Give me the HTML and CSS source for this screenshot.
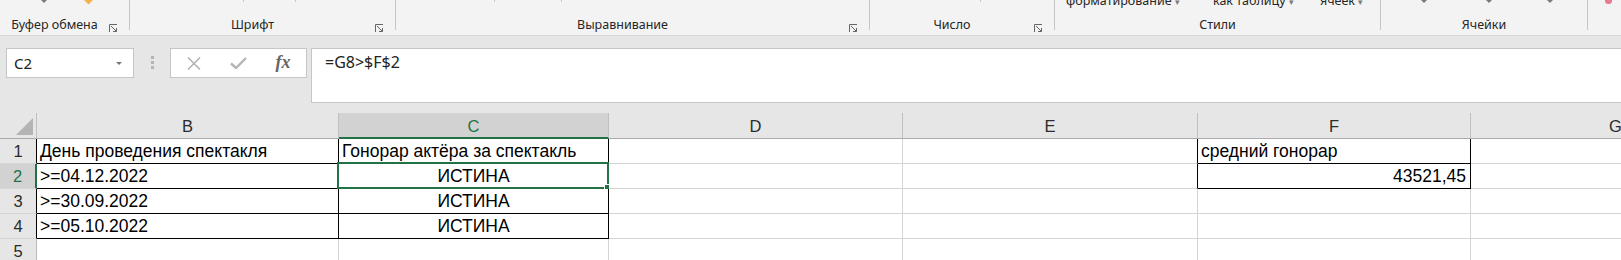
FILE: index.html
```html
<!DOCTYPE html>
<html>
<head>
<meta charset="utf-8">
<title>Книга1 - Excel</title>
<link rel="stylesheet" href="styles.css">
</head>
<body>

<div class="ribbon">
  <div class="group g-clip">
    <div class="top">
      <span class="caret" style="margin-left:41px"></span>
      <span class="paste-tip"></span>
    </div>
    <div class="foot">
      <span class="label">Буфер обмена</span>
      <span class="launch"><svg width="9" height="9" viewBox="0 0 9 9"><path d="M0.5 8V0.5H8" fill="none" stroke="#666"/><path d="M2 2L7.5 7.5M4 7.5H7.5V4" fill="none" stroke="#666"/></svg></span>
    </div>
  </div>
  <div class="group g-font">
    <div class="top">
      <span class="tick" style="margin-left:113px"></span>
      <span class="tick" style="margin-left:51px"></span>
    </div>
    <div class="foot">
      <span class="label">Шрифт</span>
      <span class="launch"><svg width="9" height="9" viewBox="0 0 9 9"><path d="M0.5 8V0.5H8" fill="none" stroke="#666"/><path d="M2 2L7.5 7.5M4 7.5H7.5V4" fill="none" stroke="#666"/></svg></span>
    </div>
  </div>
  <div class="group g-align">
    <div class="top">
      <span class="tick" style="margin-left:98px"></span>
      <span class="tick" style="margin-left:66px"></span>
    </div>
    <div class="foot">
      <span class="label">Выравнивание</span>
      <span class="launch"><svg width="9" height="9" viewBox="0 0 9 9"><path d="M0.5 8V0.5H8" fill="none" stroke="#666"/><path d="M2 2L7.5 7.5M4 7.5H7.5V4" fill="none" stroke="#666"/></svg></span>
    </div>
  </div>
  <div class="group g-num">
    <div class="top">
      <span class="tick" style="margin-left:110px"></span>
    </div>
    <div class="foot">
      <span class="label">Число</span>
      <span class="launch"><svg width="9" height="9" viewBox="0 0 9 9"><path d="M0.5 8V0.5H8" fill="none" stroke="#666"/><path d="M2 2L7.5 7.5M4 7.5H7.5V4" fill="none" stroke="#666"/></svg></span>
    </div>
  </div>
  <div class="group g-styles">
    <div class="top">
      <span class="cut w1">форматирование <i>▾</i></span>
      <span class="cut w2">как таблицу <i>▾</i></span>
      <span class="cut">ячеек <i>▾</i></span>
    </div>
    <div class="foot">
      <span class="label">Стили</span>
    </div>
  </div>
  <div class="group g-cells">
    <div class="top">
      <span class="caret" style="margin-left:40px"></span>
      <span class="caret" style="margin-left:59px"></span>
      <span class="caret" style="margin-left:55px"></span>
    </div>
    <div class="foot">
      <span class="label">Ячейки</span>
    </div>
  </div>
  <div class="group g-edit">
    <div class="top">
      <span class="eraser"></span>
    </div>
  </div>
</div>

<div class="fbar">
  <div class="namebox">
    <span>C2</span>
    <span class="nb-arrow"></span>
  </div>
  <div class="grip"><i></i><i></i><i></i></div>
  <div class="fxbox">
    <span class="slot s1"><svg width="14" height="13" viewBox="0 0 14 13"><path d="M1 0.5L13 12.5M13 0.5L1 12.5" stroke="#b4b4b4" stroke-width="1.6"/></svg></span>
    <span class="slot s2"><svg width="17" height="12" viewBox="0 0 17 12"><path d="M1 6.5L6 11L16 1" fill="none" stroke="#b4b4b4" stroke-width="2.4"/></svg></span>
    <span class="slot s3"><span class="fx">fx</span></span>
  </div>
  <div class="formula">=G8&gt;$F$2</div>
</div>

<div class="sheet">
  <div class="corner"><svg width="17" height="17" viewBox="0 0 17 17"><path d="M17 0V17H0Z" fill="#b4b4b4"/></svg></div>
  <div class="ch">B</div>
  <div class="ch ch-sel">C</div>
  <div class="ch">D</div>
  <div class="ch">E</div>
  <div class="ch">F</div>
  <div class="ch">G</div>

  <div class="rh rh-k">1</div>
  <div class="c k">День проведения спектакля</div>
  <div class="c k">Гонорар актёра за спектакль</div>
  <div class="c"></div>
  <div class="c kr"></div>
  <div class="c k">средний гонорар</div>
  <div class="c"></div>

  <div class="rh rh-sel">2</div>
  <div class="c k">&gt;=04.12.2022</div>
  <div class="c k mid active">ИСТИНА<span class="sel"><span class="handle"></span></span></div>
  <div class="c"></div>
  <div class="c kr"></div>
  <div class="c k num">43521,45</div>
  <div class="c"></div>

  <div class="rh rh-k">3</div>
  <div class="c k">&gt;=30.09.2022</div>
  <div class="c k mid">ИСТИНА</div>
  <div class="c"></div>
  <div class="c"></div>
  <div class="c"></div>
  <div class="c"></div>

  <div class="rh rh-k">4</div>
  <div class="c k">&gt;=05.10.2022</div>
  <div class="c k mid">ИСТИНА</div>
  <div class="c"></div>
  <div class="c"></div>
  <div class="c"></div>
  <div class="c"></div>

  <div class="rh">5</div>
  <div class="c"></div>
  <div class="c"></div>
  <div class="c"></div>
  <div class="c"></div>
  <div class="c"></div>
  <div class="c"></div>
</div>

</body>
</html>
```

FILE: styles.css
```css
body {
  margin: 0;
  width: 1621px;
  height: 260px;
  overflow: hidden;
  background: #e6e6e6;
  font-family: "Noto Sans", "Open Sans", sans-serif;
  color: #262626;
}

/* ribbon (only the bottom strip is visible) */
.ribbon {
  display: flex;
  height: 35px;
  background: #f3f3f3;
  border-bottom: 1px solid #d6d6d6;
  overflow: hidden;
}
.group {
  height: 30px;
  display: flex;
  flex-direction: column;
  border-right: 1px solid #c6c6c6;
  box-sizing: border-box;
}
.g-clip   { width: 130px; }
.g-font   { width: 266px; }
.g-align  { width: 474px; }
.g-num    { width: 185px; }
.g-styles { width: 326px; }
.g-cells  { width: 207px; }
.g-edit   { flex: 1; border-right: none; }

.top {
  height: 17px;
  display: flex;
  align-items: flex-start;
  overflow: hidden;
  font-size: 12.5px;
  line-height: 16px;
}
.foot {
  display: flex;
  height: 13px;
  font-size: 12.5px;
  line-height: 16px;
}
.label {
  flex: 1;
  text-align: center;
  white-space: nowrap;
}
.launch {
  width: 20px;
  padding-top: 4px;
  box-sizing: border-box;
}

.caret {
  width: 0;
  height: 0;
  border-left: 3px solid transparent;
  border-right: 3px solid transparent;
  border-top: 3px solid #7a7a7a;
}
.paste-tip {
  width: 7px;
  height: 7px;
  margin: -4px 0 0 38px;
  background: #f2b24d;
  transform: rotate(45deg);
}
.tick {
  width: 1px;
  height: 2px;
  background: #c8c8c8;
}
.eraser {
  width: 7px;
  height: 5px;
  margin: -1px 0 0 17px;
  background: #e97a95;
  border-radius: 0 0 3px 3px;
}
.g-styles .top { padding-left: 11px; }
.cut {
  margin-top: -7px;
  white-space: nowrap;
}
.cut i {
  font-style: normal;
  font-size: 9px;
  color: #7a7a7a;
}
.w1 { width: 147px; }
.w2 { width: 107px; }

/* formula bar */
.fbar {
  display: flex;
  align-items: flex-start;
  padding: 12px 0 0 6px;
}
.namebox {
  width: 128px;
  height: 30px;
  box-sizing: border-box;
  display: flex;
  align-items: center;
  padding-left: 7px;
  background: #fff;
  border: 1px solid #c6c6c6;
  font-size: 15px;
  color: #222;
}
.nb-arrow {
  margin: 0 11px 0 auto;
  border-left: 3px solid transparent;
  border-right: 3px solid transparent;
  border-top: 3px solid #777;
}
.grip {
  display: flex;
  flex-direction: column;
  gap: 2px;
  margin: 8px 0 0 17px;
}
.grip i {
  width: 3px;
  height: 3px;
  background: #b5b5b5;
}
.fxbox {
  width: 137px;
  height: 30px;
  box-sizing: border-box;
  display: flex;
  margin-left: 16px;
  background: #fff;
  border: 1px solid #c6c6c6;
}
.slot {
  display: flex;
  align-items: center;
  justify-content: center;
}
.s1 { width: 45px; }
.s2 { width: 44px; }
.s3 { flex: 1; }
.fx {
  font-family: "Liberation Serif", serif;
  font-style: italic;
  font-weight: bold;
  font-size: 18px;
  color: #666;
  margin-top: -2px;
}
.formula {
  flex: 1;
  height: 55px;
  box-sizing: border-box;
  margin-left: 4px;
  padding: 3px 0 0 13px;
  background: #fff;
  border: 1px solid #c6c6c6;
  border-right: none;
  font-size: 16px;
  line-height: 20px;
  color: #222;
}

/* sheet grid, column G runs past the window edge */
.sheet {
  display: grid;
  grid-template-columns: 37px 302px 270px 294px 295px 273px 290px;
  grid-template-rows: 26px repeat(5, 25px);
  margin-top: 10px;
  overflow: hidden;
  font-family: "Liberation Sans", Arial, sans-serif;
}
.corner {
  display: flex;
  align-items: flex-end;
  justify-content: flex-end;
  padding: 0 3px 3px 0;
  border-right: 1px solid #c0c0c0;
  border-bottom: 1px solid #ababab;
}
.ch {
  text-align: center;
  font-size: 16.5px;
  line-height: 26px;
  color: #2b2b2b;
  border-right: 1px solid #c0c0c0;
  border-bottom: 1px solid #ababab;
}
.ch-sel {
  background: #d2d2d2;
  color: #217346;
  border-bottom: 2px solid #217346;
}
.rh {
  text-align: center;
  font-size: 16.5px;
  line-height: 24px;
  color: #2b2b2b;
  border-right: 1px solid #bcbcbc;
  border-bottom: 1px solid #d4d4d4;
}
.rh-k { border-right-color: #000; }
.rh-sel {
  background: #d2d2d2;
  color: #217346;
  border-right: 2px solid #217346;
}
.corner, .ch, .rh, .c { box-sizing: border-box; }

.c {
  position: relative;
  padding: 0 3px;
  font-size: 17.5px;
  line-height: 24px;
  color: #000;
  white-space: nowrap;
  background: #fff;
  border-right: 1px solid #d4d4d4;
  border-bottom: 1px solid #d4d4d4;
}
.k {
  border-right-color: #000;
  border-bottom-color: #000;
}
.kr { border-right-color: #000; }
.mid { text-align: center; }
.num { text-align: right; padding-right: 4px; }

.sel {
  position: absolute;
  top: -2px;
  left: -2px;
  right: -1px;
  bottom: -1px;
  border: 2px solid #217346;
}
.handle {
  position: absolute;
  right: -4px;
  bottom: -4px;
  width: 6px;
  height: 6px;
  background: #217346;
  box-shadow: 0 0 0 1px #fff;
}
```
